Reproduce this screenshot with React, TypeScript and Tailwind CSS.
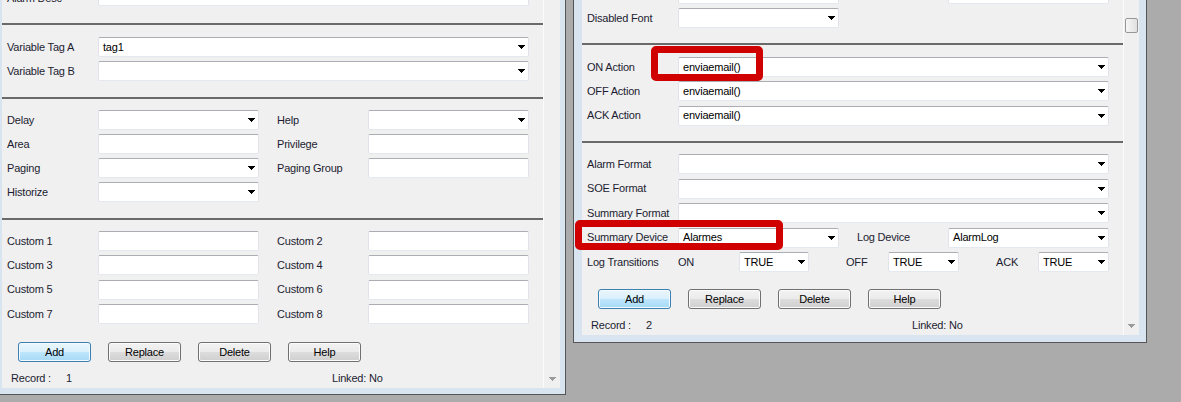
import type { ReactNode } from 'react'

// Windows 7 classic-ish form dialogs, two MDI windows over a grey desktop

function DropArrow() {
  return (
    <svg width="7" height="4" viewBox="0 0 7 4" shapeRendering="crispEdges" className="shrink-0">
      <path d="M0 0h7v1h-1v1h-1v1h-1v1h-1v-1h-1v-1h-1v-1h-1z" fill="#000" />
    </svg>
  )
}

function ScrollArrow() {
  return (
    <svg width="7" height="4" viewBox="0 0 7 4" shapeRendering="crispEdges" className="shrink-0">
      <path d="M0 0h7v1h-1v1h-1v1h-1v1h-1v-1h-1v-1h-1v-1h-1z" fill="#9a9a9a" />
    </svg>
  )
}

function Box({ w, value, drop }: { w: string; value?: string; drop?: boolean }) {
  return (
    <div
      className={`${w} flex h-5 shrink-0 items-center justify-between rounded-[2px] border border-[#e2e3ea] border-t-[#abadb3] border-b-[#e3e9ef] bg-white pl-1 pr-[3px] text-black`}
    >
      <span className="whitespace-pre">{value}</span>
      {drop && <DropArrow />}
    </div>
  )
}

function Lbl({ children, w = 'w-[91px]' }: { children?: ReactNode; w?: string }) {
  return <span className={`${w} shrink-0 whitespace-nowrap`}>{children}</span>
}

function Row({ children }: { children: ReactNode }) {
  return <div className="flex h-5 items-center pl-[5px]">{children}</div>
}

function Gap() {
  return <span className="w-[18px] shrink-0" />
}

function Divider() {
  return <div className="h-[2px] bg-[#6a6a6a]" />
}

function Btn({ label, primary }: { label: string; primary?: boolean }) {
  return (
    <button
      type="button"
      className={
        primary
          ? 'h-5 w-[73px] rounded-[3px] border border-[#3c7fb1] bg-[linear-gradient(#eaf6fd,#d9f0fc_50%,#bee6fd_50%,#a7d9f5)] text-center text-black shadow-[inset_0_0_0_1px_#f4fbff]'
          : 'h-5 w-[73px] rounded-[3px] border border-[#707070] bg-[linear-gradient(#f2f2f2,#ebebeb_50%,#dddddd_50%,#cfcfcf)] text-center text-black shadow-[inset_0_0_0_1px_#fcfcfc]'
      }
    >
      {label}
    </button>
  )
}

function Buttons({ mt }: { mt: string }) {
  return (
    <div className={`flex gap-[17px] pl-4 ${mt}`}>
      <Btn label="Add" primary />
      <Btn label="Replace" />
      <Btn label="Delete" />
      <Btn label="Help" />
    </div>
  )
}

function RecordRow({ n }: { n: string }) {
  return (
    <div className="mt-2 flex h-4 items-center pl-[9px]">
      <span className="w-[55px] shrink-0">Record :</span>
      <span className="w-[266px] shrink-0">{n}</span>
      <span>Linked: No</span>
    </div>
  )
}

function LeftWindow() {
  return (
    <div className="absolute left-[-7px] top-[-30px] flex border border-[#555] bg-[#d9e4f1] pb-[6px] pl-2 pr-[5px]">
      <div className="flex h-[417px] w-[541px] flex-col bg-[#f0f0f0]">
        <div className="flex flex-col pb-[17px] pt-[15px]">
          <Row>
            <Lbl>
              <span className="inline-block pt-1">Alarm Desc</span>
            </Lbl>
            <Box w="w-[431px]" />
          </Row>
        </div>
        <Divider />
        <div className="flex flex-col gap-1 pb-4 pt-3">
          <Row>
            <Lbl>Variable Tag A</Lbl>
            <Box w="w-[431px]" value="tag1" drop />
          </Row>
          <Row>
            <Lbl>Variable Tag B</Lbl>
            <Box w="w-[431px]" drop />
          </Row>
        </div>
        <Divider />
        <div className="flex flex-col gap-1 pb-4 pt-[11px]">
          <Row>
            <Lbl>Delay</Lbl>
            <Box w="w-[161px]" drop />
            <Gap />
            <Lbl>Help</Lbl>
            <Box w="w-[161px]" drop />
          </Row>
          <Row>
            <Lbl>Area</Lbl>
            <Box w="w-[161px]" />
            <Gap />
            <Lbl>Privilege</Lbl>
            <Box w="w-[161px]" />
          </Row>
          <Row>
            <Lbl>Paging</Lbl>
            <Box w="w-[161px]" drop />
            <Gap />
            <Lbl>Paging Group</Lbl>
            <Box w="w-[161px]" />
          </Row>
          <Row>
            <Lbl>Historize</Lbl>
            <Box w="w-[161px]" drop />
          </Row>
        </div>
        <Divider />
        <div className="flex flex-col gap-[4.33px] pt-[11px]">
          {[1, 3, 5, 7].map((i) => (
            <Row key={i}>
              <Lbl>Custom {i}</Lbl>
              <Box w="w-[161px]" />
              <Gap />
              <Lbl>Custom {i + 1}</Lbl>
              <Box w="w-[161px]" />
            </Row>
          ))}
        </div>
        <Buttons mt="mt-[18px]" />
        <RecordRow n="1" />
      </div>
      <div className="flex w-[17px] flex-col items-center justify-end border-l border-[#fbfbfb] bg-[#f0f0f0] pb-[7px]">
        <ScrollArrow />
      </div>
    </div>
  )
}

function RightWindow() {
  return (
    <div className="absolute left-[573px] top-[-30px] flex border border-[#555] bg-[#d9e4f1] pb-[7px] pl-2 pr-[7px]">
      <div className="flex h-[364px] w-[541px] flex-col bg-[#f0f0f0]">
        <div className="flex flex-col gap-1 pb-[15px] pt-[13px]">
          <Row>
            <Lbl />
            <Box w="w-[161px]" />
            <Gap />
            <Lbl />
            <Box w="w-[161px]" />
          </Row>
          <Row>
            <Lbl>Disabled Font</Lbl>
            <Box w="w-[161px]" drop />
          </Row>
        </div>
        <Divider />
        <div className="flex flex-col gap-[4.33px] pb-[15.5px] pt-3">
          <Row>
            <Lbl>ON Action</Lbl>
            <Box w="w-[431px]" value="enviaemail()" drop />
          </Row>
          <Row>
            <Lbl>OFF Action</Lbl>
            <Box w="w-[431px]" value="enviaemail()" drop />
          </Row>
          <Row>
            <Lbl>ACK Action</Lbl>
            <Box w="w-[431px]" value="enviaemail()" drop />
          </Row>
        </div>
        <Divider />
        <div className="flex flex-col gap-[4.5px] pt-[11px]">
          <Row>
            <Lbl>Alarm Format</Lbl>
            <Box w="w-[431px]" drop />
          </Row>
          <Row>
            <Lbl>SOE Format</Lbl>
            <Box w="w-[431px]" drop />
          </Row>
          <Row>
            <Lbl>Summary Format</Lbl>
            <Box w="w-[431px]" drop />
          </Row>
          <Row>
            <Lbl>Summary Device</Lbl>
            <Box w="w-[161px]" value="Alarmes" drop />
            <Gap />
            <Lbl>Log Device</Lbl>
            <Box w="w-[161px]" value="AlarmLog" drop />
          </Row>
          <Row>
            <Lbl>Log Transitions</Lbl>
            <Lbl w="w-[61px]">ON</Lbl>
            <Box w="w-[70px]" value="TRUE" drop />
            <span className="w-[37px] shrink-0" />
            <Lbl w="w-[42px]">OFF</Lbl>
            <Box w="w-[71px]" value="TRUE" drop />
            <span className="w-[37px] shrink-0" />
            <Lbl w="w-[42px]">ACK</Lbl>
            <Box w="w-[71px]" value="TRUE" drop />
          </Row>
        </div>
        <Buttons mt="mt-[17px]" />
        <RecordRow n="2" />
      </div>
      <div className="flex w-4 flex-col items-center justify-between border-l border-[#fbfbfb] bg-[#f0f0f0] pb-[7px] pt-[47px]">
        <div className="h-[15px] w-[13px] rounded-[2px] border border-[#979797] bg-[linear-gradient(90deg,#f6f6f6,#e0e0e0)]" />
        <ScrollArrow />
      </div>
    </div>
  )
}

export default function App() {
  return (
    <div className="relative h-[402px] w-[1181px] overflow-hidden bg-[#ababab] font-['Liberation_Sans',Arial,sans-serif] text-[11px] tracking-[-0.2px] text-[#1c1c30]">
      <LeftWindow />
      <RightWindow />
      {/* red highlight boxes drawn over the screenshot */}
      <div className="absolute left-[651px] top-[46px] h-[35px] w-[112px] rounded-[5px] border-[7px] border-[#d00000]" />
      <div className="absolute left-[575px] top-[220px] h-[30px] w-[208px] rounded-[5px] border-[7px] border-[#d00000]" />
    </div>
  )
}
